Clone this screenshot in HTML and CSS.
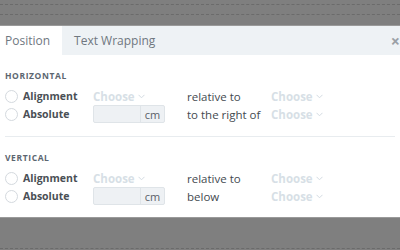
FILE: index.html
```html
<!DOCTYPE html>
<html>
<head>
<meta charset="utf-8">
<link rel="stylesheet" href="styles.css">
</head>
<body>
<div class="top-bg">
  <div class="dash"></div>
  <div class="dash"></div>
</div>
<div class="dialog">
  <div class="tabs">
    <div class="tab active">Position</div>
    <div class="tab">Text Wrapping</div>
    <div class="close">&times;</div>
  </div>
  <div class="body">
    <div class="section">
      <div class="heading">HORIZONTAL</div>
      <div class="row">
        <span class="radio"></span>
        <span class="label">Alignment</span>
        <span class="choose">Choose <svg class="chev" width="7" height="5" viewBox="0 0 7 5"><polyline points="0.5,0.8 3.5,3.8 6.5,0.8" fill="none" stroke="#d3dbe2" stroke-width="1"/></svg></span>
        <span class="rel">relative to</span>
        <span class="choose">Choose <svg class="chev" width="7" height="5" viewBox="0 0 7 5"><polyline points="0.5,0.8 3.5,3.8 6.5,0.8" fill="none" stroke="#d3dbe2" stroke-width="1"/></svg></span>
      </div>
      <div class="row">
        <span class="radio"></span>
        <span class="label">Absolute</span>
        <span class="input"><span class="field"></span><span class="unit">cm</span></span>
        <span class="rel">to the right of</span>
        <span class="choose">Choose <svg class="chev" width="7" height="5" viewBox="0 0 7 5"><polyline points="0.5,0.8 3.5,3.8 6.5,0.8" fill="none" stroke="#d3dbe2" stroke-width="1"/></svg></span>
      </div>
    </div>
    <div class="section second">
      <div class="heading">VERTICAL</div>
      <div class="row">
        <span class="radio"></span>
        <span class="label">Alignment</span>
        <span class="choose">Choose <svg class="chev" width="7" height="5" viewBox="0 0 7 5"><polyline points="0.5,0.8 3.5,3.8 6.5,0.8" fill="none" stroke="#d3dbe2" stroke-width="1"/></svg></span>
        <span class="rel">relative to</span>
        <span class="choose">Choose <svg class="chev" width="7" height="5" viewBox="0 0 7 5"><polyline points="0.5,0.8 3.5,3.8 6.5,0.8" fill="none" stroke="#d3dbe2" stroke-width="1"/></svg></span>
      </div>
      <div class="row">
        <span class="radio"></span>
        <span class="label">Absolute</span>
        <span class="input"><span class="field"></span><span class="unit">cm</span></span>
        <span class="rel">below</span>
        <span class="choose">Choose <svg class="chev" width="7" height="5" viewBox="0 0 7 5"><polyline points="0.5,0.8 3.5,3.8 6.5,0.8" fill="none" stroke="#d3dbe2" stroke-width="1"/></svg></span>
      </div>
    </div>
  </div>
</div>
<div class="bottom-bg">
  <div class="dash"></div>
</div>
</body>
</html>
```
FILE: styles.css
```css
* { box-sizing: border-box; }
html, body { margin: 0; padding: 0; }
body {
  width: 400px;
  height: 250px;
  overflow: hidden;
  background: #7f7f7f;
  font-family: "Open Sans", "Liberation Sans", sans-serif;
  color: #4a4f55;
}
.top-bg {
  height: 26px;
  padding-top: 4px;
  display: flex;
  flex-direction: column;
  gap: 9px;
  border-bottom: 1px solid #9a9a9a;
}
.dash {
  height: 1px;
  border-top: 1px dashed #6b6b6b;
}
.dialog {
  background: #fff;
}
.tabs {
  height: 29px;
  display: flex;
  align-items: stretch;
  background: #eef2f5;
  position: relative;
}
.tab {
  display: flex;
  align-items: center;
  padding: 0 12px 0 5px;
  font-size: 12px;
  color: #6f7780;
}
.tab.active {
  background: #fff;
}
.tab + .tab { padding-left: 12px; }
.close {
  position: absolute;
  right: 0;
  top: 5px;
  font-size: 16px;
  font-weight: 700;
  color: #9aa0a6;
  line-height: 20px;
}
.body {
  padding: 0 5px;
}
.section {
  padding-top: 15px;
  padding-bottom: 13px;
}
.section.second {
  border-top: 1px solid #e8ecef;
  padding-top: 15px;
  padding-bottom: 12px;
}
.heading {
  font-size: 8.5px;
  font-weight: 700;
  letter-spacing: 0.6px;
  color: #5c6670;
  line-height: 12px;
  margin-bottom: 5px;
}
.row {
  display: grid;
  grid-template-columns: 18px 70px 94px 84px auto;
  align-items: center;
  height: 18px;
}
.radio {
  width: 13px;
  height: 13px;
  border: 1px solid #d4d9de;
  border-radius: 50%;
  background: #fff;
}
.label {
  font-size: 10.5px;
  font-weight: 700;
  color: #4a4f55;
}
.choose {
  font-size: 11.5px;
  font-weight: 700;
  color: #d7dfe6;
  white-space: nowrap;
  display: flex;
  align-items: center;
  gap: 3px;
}
.chev {
  display: block;
  margin-top: 1px;
}
.rel {
  font-size: 11.5px;
  color: #444a50;
  white-space: nowrap;
}
.input {
  display: flex;
  width: 72px;
  height: 18px;
  border: 1px solid #dfe4e8;
  border-radius: 2px;
  background: #eef1f4;
  align-self: center;
}
.field { flex: 1; }
.unit {
  width: 24px;
  border-left: 1px solid #dfe4e8;
  font-size: 11px;
  color: #5a6068;
  display: flex;
  align-items: center;
  justify-content: center;
}
.bottom-bg {
  height: 40px;
  padding-top: 30px;
  border-top: 1px solid #9a9a9a;
}
```
